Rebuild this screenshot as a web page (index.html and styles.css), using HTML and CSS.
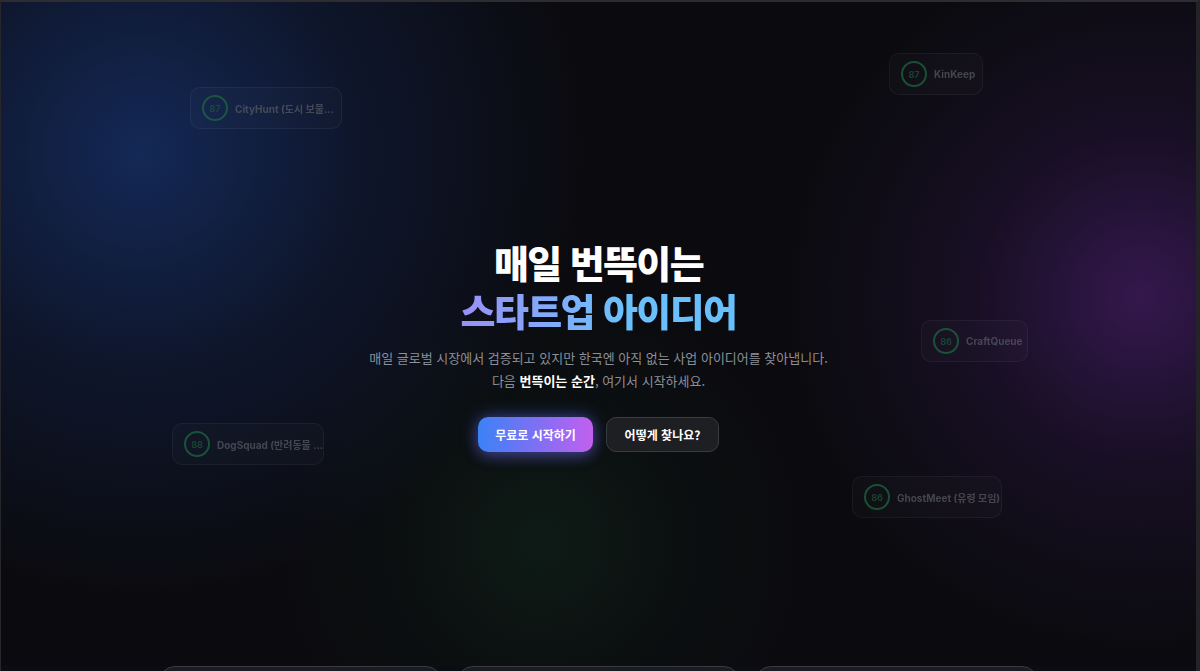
FILE: index.html
```html
<!DOCTYPE html>
<html lang="ko">
<head>
    <meta charset="UTF-8">
    <meta name="viewport" content="width=device-width, initial-scale=1.0">
    <title>번뜩 - 매일 번뜩이는 스타트업 아이디어</title>
    <link rel="stylesheet" href="styles.css">
</head>
<body>
    <div class="page">
        <section class="hero">
            <!-- 배경 떠다니는 아이디어 카드 -->
            <div class="float-card fc-cityhunt"><span class="score">87</span><span class="fc-name">CityHunt (도시 보물...</span></div>
            <div class="float-card fc-kinkeep"><span class="score">87</span><span class="fc-name">KinKeep</span></div>
            <div class="float-card fc-craft"><span class="score">86</span><span class="fc-name">CraftQueue</span></div>
            <div class="float-card fc-dog"><span class="score">88</span><span class="fc-name">DogSquad (반려동물 ...</span></div>
            <div class="float-card fc-ghost"><span class="score">86</span><span class="fc-name">GhostMeet (유령 모임)</span></div>

            <div class="hero-content">
                <h1 class="hero-title">
                    <span class="line">매일 번뜩이는</span>
                    <span class="line gradient">스타트업 아이디어</span>
                </h1>
                <p class="hero-sub">
                    매일 글로벌 시장에서 검증되고 있지만 한국엔 아직 없는 사업 아이디어를 찾아냅니다.<br>
                    다음 <strong>번뜩이는 순간</strong>, 여기서 시작하세요.
                </p>
                <div class="hero-actions">
                    <button class="btn btn-primary">무료로 시작하기</button>
                    <button class="btn btn-ghost">어떻게 찾나요?</button>
                </div>
            </div>
        </section>

        <section class="cards">
            <div class="card"></div>
            <div class="card"></div>
            <div class="card"></div>
        </section>
    </div>
</body>
</html>
```

FILE: styles.css
```css
/* ==========================================================================
   BASE
   ========================================================================== */
:root {
    --bg: #0b0b0f;
    --text: #ffffff;
    --text-muted: #8b8f98;
    --card-border: rgba(255, 255, 255, 0.07);
    --score-green: #1f6b43;
}

html, body { height: 100%; }

body {
    margin: 0;
    overflow: hidden;
    background: var(--bg);
    color: var(--text);
    font-family: Inter, "Noto Sans CJK KR", sans-serif;
}

.page {
    height: 100vh;
    box-sizing: border-box;
    border-top: 2px solid #2c2c31;
    border-left: 1px solid #26262b;
    border-right: 4px solid #232328;
    overflow: hidden;
    background: var(--bg);
}

/* ==========================================================================
   HERO
   ========================================================================== */
.hero {
    position: relative;
    height: 664px;
    padding-top: 236px;
    box-sizing: border-box;
    background:
        radial-gradient(circle at 140px 150px, rgba(22, 48, 104, 0.8) 0, rgba(18, 36, 80, 0.45) 210px, rgba(12, 14, 24, 0) 440px),
        radial-gradient(circle at 1140px 295px, rgba(66, 28, 98, 0.75) 0, rgba(40, 20, 64, 0.42) 170px, rgba(12, 10, 18, 0) 350px),
        radial-gradient(circle at 540px 540px, rgba(16, 44, 28, 0.5) 0, rgba(14, 30, 22, 0.25) 130px, rgba(11, 11, 15, 0) 260px),
        var(--bg);
}

.hero-content {
    position: relative;
    z-index: 1;
    text-align: center;
}

.hero-title {
    margin: 0;
    font-family: "Noto Sans CJK KR", sans-serif;
    font-size: 38px;
    font-weight: 900;
    line-height: 48px;
    letter-spacing: -1.6px;
}

.hero-title .line { display: block; }

.hero-title .gradient {
    background: linear-gradient(90deg, #ae8af8 0%, #9c8ef8 38%, #6cc0fb 52%, #62befb 72%, #a090f6 100%);
    -webkit-background-clip: text;
    background-clip: text;
    color: transparent;
}

.hero-sub {
    margin: 12px 0 0;
    font-family: "Noto Sans CJK KR", sans-serif;
    font-size: 13px;
    line-height: 23px;
    color: var(--text-muted);
}

.hero-sub strong { color: #fff; font-weight: 700; }

.hero-actions {
    display: flex;
    justify-content: center;
    gap: 13px;
    margin-top: 25px;
}

.btn {
    height: 35px;
    padding: 0;
    border-radius: 10px;
    font-family: "Noto Sans CJK KR", sans-serif;
    font-size: 12px;
    font-weight: 700;
    color: #fff;
    white-space: nowrap;
    cursor: pointer;
}

.btn-primary {
    width: 115px;
    border: none;
    background: linear-gradient(90deg, #3b82f6 0%, #8b6cf4 60%, #c260ee 100%);
    box-shadow: 0 0 18px rgba(80, 120, 250, 0.45), 0 4px 14px rgba(140, 90, 240, 0.3);
}

.btn-ghost {
    width: 113px;
    background: #1e1f23;
    border: 1px solid #3a3b40;
}

/* --- cartes flottantes --- */
.float-card {
    position: absolute;
    display: flex;
    align-items: center;
    gap: 7px;
    height: 42px;
    box-sizing: border-box;
    padding: 0 10px 0 11px;
    border-radius: 10px;
    background: rgba(255, 255, 255, 0.025);
    border: 1px solid var(--card-border);
    opacity: 0.72;
    white-space: nowrap;
    overflow: hidden;
}

.score {
    flex: 0 0 26px;
    width: 26px;
    height: 26px;
    box-sizing: border-box;
    border: 2px solid var(--score-green);
    border-radius: 50%;
    display: flex;
    align-items: center;
    justify-content: center;
    font-size: 9px;
    font-weight: 700;
    color: #1d5a3a;
}

.fc-name {
    font-family: Inter, "Noto Sans CJK KR", sans-serif;
    font-size: 10px;
    font-weight: 700;
    color: #585c65;
}

.fc-cityhunt { left: 189px; top: 85px; width: 152px; }
.fc-kinkeep  { left: 888px; top: 51px; width: 94px; }
.fc-craft    { left: 920px; top: 318px; width: 107px; }
.fc-dog      { left: 171px; top: 421px; width: 152px; }
.fc-ghost    { left: 851px; top: 474px; width: 150px; }

/* ==========================================================================
   CARTES
   ========================================================================== */
.cards {
    display: grid;
    grid-template-columns: repeat(3, 283px);
    gap: 15px;
    justify-content: center;
    padding-bottom: 40px;
    background: #0c0d12;
}

.card {
    height: 220px;
    border: 1px solid #3a3b42;
    border-radius: 16px;
    background: #1b1c22;
}
```
